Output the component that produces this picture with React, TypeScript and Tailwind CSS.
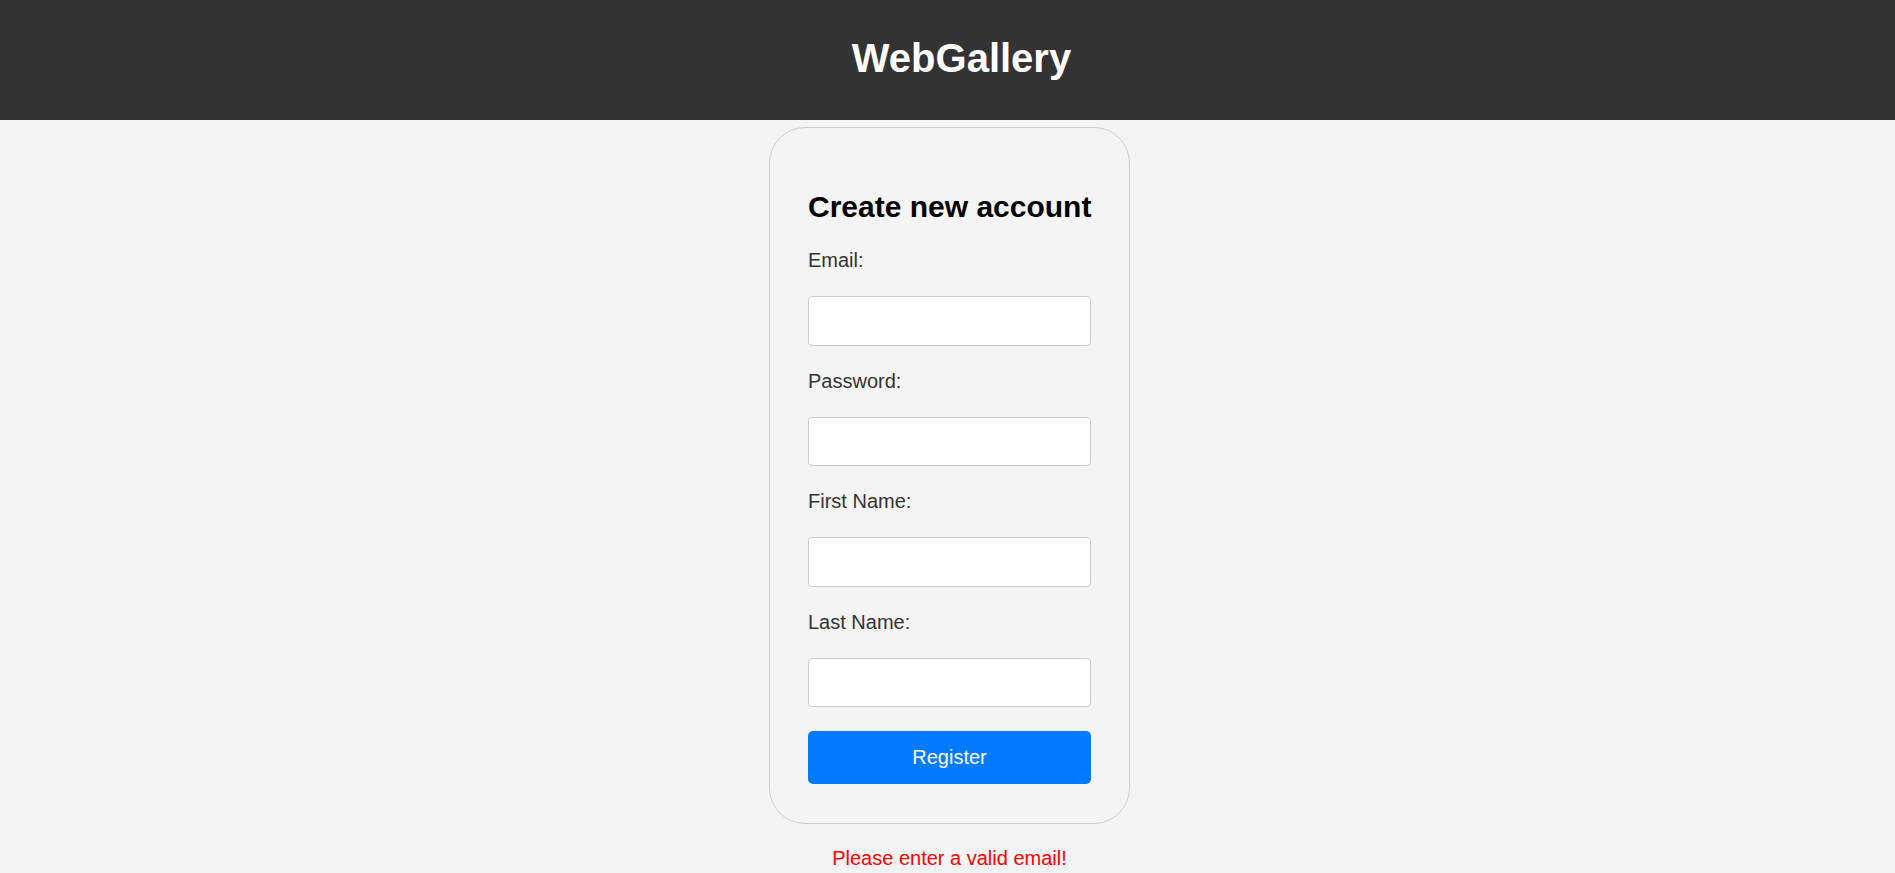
import React from "react";

const font = { fontFamily: '"Liberation Sans", Arial, sans-serif' };

function Field({ label, type }: { label: string; type: string }) {
  return (
    <div className="flex flex-col">
      <label className="text-[20px] leading-[23px] text-[#333333] mb-[24px]">{label}</label>
      <input
        type={type}
        className="h-[49.5px] w-full rounded-[4px] border border-[#cccccc] bg-white px-[10px] text-[20px] outline-none mb-[24px]"
      />
    </div>
  );
}

export default function App() {
  return (
    <div className="min-h-screen bg-[#f4f4f4]" style={font}>
      <header className="h-[120px] bg-[#333333] flex justify-center pt-[35px] pl-[28px]">
        <h1 className="text-[40px] leading-[46px] font-bold text-white">WebGallery</h1>
      </header>
      <main className="flex flex-col items-center pl-[4px] pt-[7px]">
        <div className="w-[361px] rounded-[36px] border border-[#cccccc] bg-[#f4f4f4] px-[38px] pt-[61px] pb-[39px]">
          <h2 className="text-[30px] leading-[35px] font-bold text-black mb-[25px] whitespace-nowrap">Create new account</h2>
          <Field label="Email:" type="email" />
          <Field label="Password:" type="password" />
          <Field label="First Name:" type="text" />
          <Field label="Last Name:" type="text" />
          <button className="h-[52.5px] w-full rounded-[5px] bg-[#007bff] text-[20px] leading-[23px] text-white">
            Register
          </button>
        </div>
        <p className="mt-[23px] text-[20px] leading-[23px] text-[#ff0000]">Please enter a valid email!</p>
      </main>
    </div>
  );
}
